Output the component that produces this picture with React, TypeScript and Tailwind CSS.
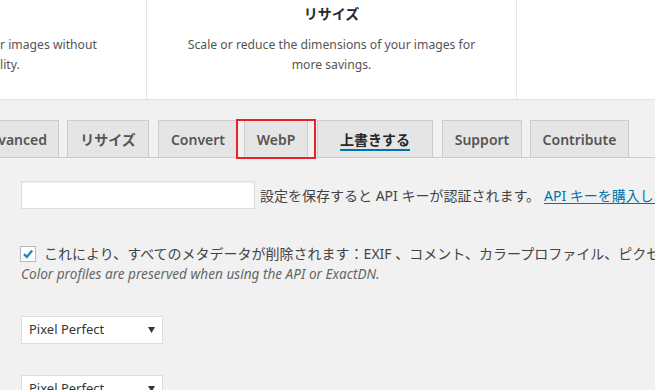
import React from "react";

const font = { fontFamily: '"Noto Sans", "Noto Sans CJK JP", sans-serif' };

function Tab({ label, w, ml, link }: { label: string; w: string; ml: string; link?: boolean }) {
  return (
    <div
      className={`${w} ${ml} h-[38px] -mb-px shrink-0 flex items-center justify-center border border-[#cccccc] bg-[#e5e5e5] text-[14px] font-semibold text-[#555555] whitespace-nowrap`}
    >
      {link ? (
        <span className="text-[#23282d] underline decoration-[#0073aa] decoration-[1.5px] underline-offset-[4px]">{label}</span>
      ) : (
        label
      )}
    </div>
  );
}

function Select({ mt }: { mt: string }) {
  return (
    <div className={`${mt} w-[142px] h-[28px] bg-white border border-[#dddddd] flex items-center justify-between pl-[7px] pr-[7px]`}>
      <span className="text-[13px] text-[#32373c]">Pixel Perfect</span>
      <svg width="7" height="6" viewBox="0 0 7 6"><path d="M0 0 H7 L3.5 6 Z" fill="#32373c" /></svg>
    </div>
  );
}

export default function App() {
  return (
    <div className="w-[655px] h-[390px] overflow-hidden bg-[#f1f1f1] text-[#444444]" style={font}>
      {/* top feature cards */}
      <div className="h-[100px] bg-white border-b border-[#e2e2e2] flex">
        <div className="w-[147px] shrink-0 border-r border-[#e5e5e5] pt-[35px] text-[12.2px] leading-[20px] text-[#555555] whitespace-nowrap">
          <p>r images without</p>
          <p>lity.</p>
        </div>
        <div className="w-[370px] shrink-0 border-r border-[#e5e5e5] text-center px-[30px]">
          <h3 className="mt-[3px] text-[14px] leading-[22px] font-semibold text-[#23282d]">リサイズ</h3>
          <p className="mt-[10px] text-[12.2px] leading-[20px] text-[#555555]">
            Scale or reduce the dimensions of your images for more savings.
          </p>
        </div>
        <div className="flex-1" />
      </div>

      {/* tabs */}
      <div className="mt-[20px] flex border-b border-[#cccccc]">
        <div className="w-[81px] -ml-[22px] h-[38px] -mb-px shrink-0 flex items-center justify-end pr-[11px] border border-[#cccccc] bg-[#e5e5e5] text-[14px] font-semibold text-[#555555] whitespace-nowrap">
          Advanced
        </div>
        <Tab label="リサイズ" w="w-[82px]" ml="ml-[8px]" />
        <Tab label="Convert" w="w-[80px]" ml="ml-[9px]" />
        <div className="relative ml-[6px] shrink-0 -mb-px">
          <div className="w-[64px] h-[38px] flex items-center justify-center border border-[#cccccc] bg-[#e5e5e5] text-[14px] font-semibold text-[#555555]">
            WebP
          </div>
          <span className="absolute left-[-8px] top-[-1px] w-[80px] h-[40px] border-2 border-[#e8222a] pointer-events-none" />
        </div>
        <Tab label="上書きする" w="w-[116px]" ml="ml-[9px]" link />
        <Tab label="Support" w="w-[80px]" ml="ml-[9px]" />
        <Tab label="Contribute" w="w-[99px]" ml="ml-[8px]" />
      </div>

      {/* settings */}
      <div className="pl-[21px]">
        <div className="mt-[23px] flex items-center whitespace-nowrap">
          <div className="w-[234px] h-[28px] shrink-0 bg-white border border-[#dddddd] shadow-[inset_0_1px_2px_rgba(0,0,0,0.07)]" />
          <span className="ml-[5px] text-[14px] text-[#444444]">設定を保存すると API キーが認証されます。</span>
          <span className="ml-[4px] text-[14px] text-[#0073aa] underline underline-offset-[2px]">API キーを購入して下さい。</span>
        </div>

        <div className="mt-[34px] flex items-center whitespace-nowrap -ml-[1px]">
          <div className="w-[16px] h-[16px] shrink-0 bg-white border border-[#b4b9be] flex items-center justify-center">
            <svg width="12" height="12" viewBox="0 0 12 12">
              <path d="M2 6.2 L4.8 9 L10.2 2.6" fill="none" stroke="#1e8cbe" strokeWidth="2.4" />
            </svg>
          </div>
          <span className="ml-[8px] text-[14px] text-[#444444]">
            これにより、すべてのメタデータが削除されます：EXIF 、コメント、カラープロファイル、ピクセル
          </span>
        </div>
        <p className="mt-0 text-[13.6px] italic text-[#666666] leading-[20px] whitespace-nowrap">
          Color profiles are preserved when using the API or ExactDN.
        </p>

        <Select mt="mt-[32px]" />
        <Select mt="mt-[31px]" />
      </div>
    </div>
  );
}
